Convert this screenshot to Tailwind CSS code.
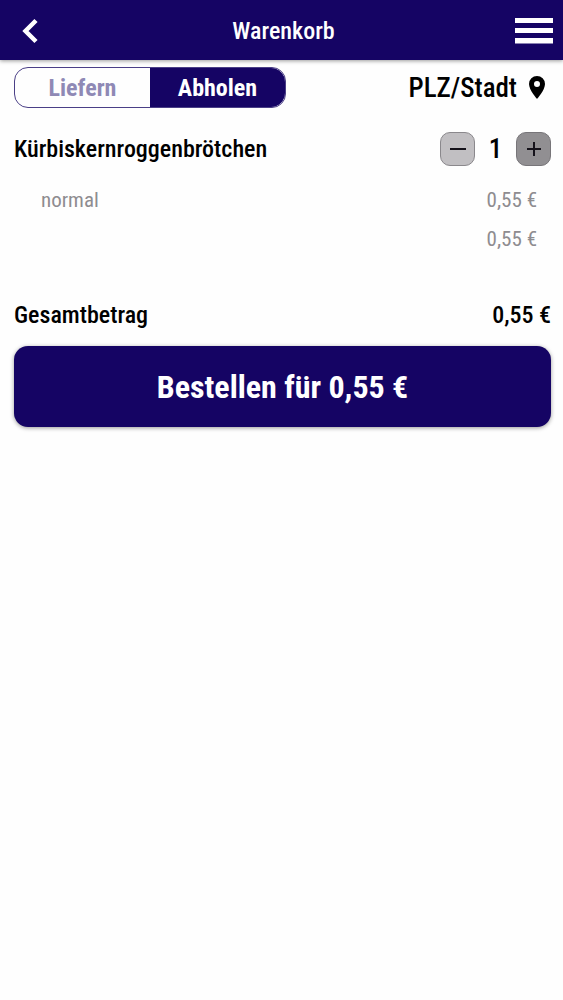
<!DOCTYPE html>
<html lang="de">
<head>
  <meta charset="UTF-8" />
  <meta name="viewport" content="width=device-width, initial-scale=1.0"/>
  <title>Warenkorb</title>
  <script src="https://cdn.jsdelivr.net/npm/@tailwindcss/browser@4"></script>
</head>
<body class="min-h-screen bg-[#fefefe] font-['Roboto_Condensed',Roboto,sans-serif] text-black">
  <header class="flex h-[60px] items-center justify-between bg-[#150464] pt-[2px] pr-2 pl-3 text-white shadow-[0_1px_4px_rgba(0,0,0,0.4)]">
    <button type="button" aria-label="Zurück" class="flex w-10 pl-[10px]">
      <svg class="h-[26px] w-4" viewBox="0 0 16 26" fill="none" stroke="currentColor" stroke-width="4.5">
        <path d="M14 2.5 3.5 13 14 23.5" />
      </svg>
    </button>
    <h1 class="text-[24px] leading-8 font-medium">Warenkorb</h1>
    <button type="button" aria-label="Menü" class="flex w-10">
      <svg class="h-[26px] w-[38px]" viewBox="0 0 38 26" fill="currentColor">
        <path d="M0 0h38v5H0zM0 10h38v5H0zM0 20h38v5.5H0z" />
      </svg>
    </button>
  </header>

  <main class="px-[14px] pt-[7px] pr-3">
    <div class="flex items-center justify-between">
      <fieldset class="flex h-[41px] w-[272px] overflow-hidden rounded-[14px] border border-[#4a3f86] text-[24px] leading-8 font-bold">
        <label class="flex flex-1 cursor-pointer items-center justify-center text-[#8f89b5] has-checked:bg-[#150464] has-checked:text-white">
          <input type="radio" name="art" value="liefern" class="sr-only" />Liefern
        </label>
        <label class="flex flex-1 cursor-pointer items-center justify-center text-[#8f89b5] has-checked:bg-[#150464] has-checked:text-white">
          <input type="radio" name="art" value="abholen" class="sr-only" checked />Abholen
        </label>
      </fieldset>
      <button type="button" class="flex items-center gap-3 pr-[6px] text-[27px] leading-8 font-medium">
        PLZ/Stadt
        <svg class="h-[23px] w-4" viewBox="0 0 16 23" fill="currentColor">
          <path fill-rule="evenodd" d="M8 0a8 8 0 0 0-8 8c0 6 8 15 8 15s8-9 8-15a8 8 0 0 0-8-8zm0 5a3 3 0 1 1 0 6 3 3 0 0 1 0-6z" />
        </svg>
      </button>
    </div>

    <section class="pt-6">
      <div class="flex items-center justify-between">
        <h2 class="text-[24px] leading-8 font-medium">Kürbiskernroggenbrötchen</h2>
        <div class="flex items-center">
          <button type="button" aria-label="Weniger" class="flex h-[34px] w-[35px] items-center justify-center rounded-[10px] border border-[#8a888c] bg-[#c1bfc2]">
            <svg class="size-4" viewBox="0 0 16 16" fill="none" stroke="#15121a" stroke-width="2"><path d="M0 8h16" /></svg>
          </button>
          <span class="w-[41px] text-center text-[27px] leading-8 font-medium">1</span>
          <button type="button" aria-label="Mehr" class="flex h-[34px] w-[35px] items-center justify-center rounded-[10px] border border-[#777579] bg-[#918f92]">
            <svg class="size-4" viewBox="0 0 16 16" fill="none" stroke="#15121a" stroke-width="2"><path d="M1 8h14M8 1v14" /></svg>
          </button>
        </div>
      </div>
      <div class="pt-[15px] pr-[14px] pl-[27px] text-[21px] leading-[39px] text-[#8e8c90]">
        <div class="flex justify-between"><span>normal</span><span>0,55 €</span></div>
        <div class="text-right">0,55 €</div>
      </div>
    </section>

    <div class="flex justify-between pt-10 text-[24px] leading-8 font-medium">
      <span>Gesamtbetrag</span>
      <span>0,55 €</span>
    </div>

    <button type="button" class="mt-[15px] h-[81px] w-full rounded-[14px] bg-[#150464] text-[32px] leading-10 font-bold text-white shadow-[0_1px_4px_rgba(0,0,0,0.4)]">Bestellen für 0,55 €</button>
  </main>
</body>
</html>
